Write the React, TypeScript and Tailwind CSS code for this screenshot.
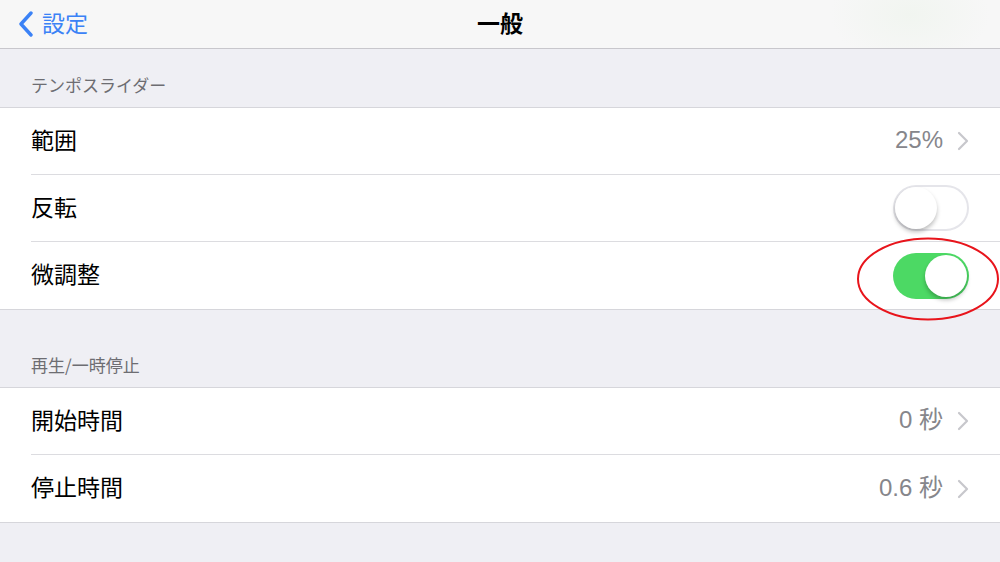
import { ReactNode } from "react"

const font = { fontFamily: '"Noto Sans CJK JP", sans-serif' }

function Chevron() {
  return (
    <svg width="13" height="20" viewBox="0 0 13 20" fill="none" className="ml-[14px]">
      <path d="M2 2l8 8-8 8" stroke="#c7c7cc" strokeWidth="2.2" strokeLinecap="round" strokeLinejoin="round" />
    </svg>
  )
}

function Toggle({ on }: { on?: boolean }) {
  return (
    <div
      className={
        on
          ? "w-[76px] h-[46px] rounded-full bg-[#4cd964] flex items-center justify-end p-[2px]"
          : "w-[76px] h-[46px] rounded-full bg-white border-2 border-[#e5e5ea] flex items-center justify-start"
      }
    >
      <div className="w-[42px] h-[42px] rounded-full bg-white shadow-[0_3px_4px_rgba(0,0,0,0.25)]" />
    </div>
  )
}

function Row({ label, right, last }: { label: string; right: ReactNode; last?: boolean }) {
  return (
    <div className="pl-[31px] bg-white">
      <div className={"h-[67px] flex items-center justify-between pr-[30px] " + (last ? "" : "border-b border-[#dcdce0]")}>
        <span className="text-[23px] text-black pb-[4px]">{label}</span>
        {right}
      </div>
    </div>
  )
}

function Value({ text }: { text: string }) {
  return (
    <div className="flex items-center">
      <span
        className="text-[24px] text-[#86868b] pb-[2px]"
        style={{ fontFamily: '"Liberation Sans", "Noto Sans CJK JP", sans-serif' }}
      >
        {text}
      </span>
      <Chevron />
    </div>
  )
}

function Section({ title, children }: { title: string; children: ReactNode }) {
  return (
    <div>
      <div className="h-[58px] flex items-end pl-[31px] pb-[10px] text-[17px] text-[#6d6d72]">{title}</div>
      <div className="border-y border-[#d6d6db]">{children}</div>
    </div>
  )
}

export default function App() {
  return (
    <div className="w-[1000px] h-[562px] bg-[#efeff4] overflow-hidden relative" style={font}>
      <header className="h-[49px] bg-[#f7f7f7] border-b border-[#c8c7cc] flex items-center relative bg-[radial-gradient(ellipse_80px_50px_at_910px_15px,#f1f5f0,transparent)]">
        <div className="flex items-center pl-[18px] text-[#3b82f6] text-[23px] pb-[3px]">
          <svg width="16" height="26" viewBox="0 0 16 26" fill="none" className="mr-[8px] mt-[3px]">
            <path d="M13 2L3 13l10 11" stroke="#3b82f6" strokeWidth="3.4" strokeLinecap="round" strokeLinejoin="round" />
          </svg>
          設定
        </div>
        <div className="absolute left-0 right-0 text-center text-[23px] font-bold text-black pointer-events-none pb-[3px]">一般</div>
      </header>

      <Section title="テンポスライダー">
        <Row label="範囲" right={<Value text="25%" />} />
        <Row label="反転" right={<div className="mr-[1px]"><Toggle /></div>} />
        <Row label="微調整" right={<div className="mr-[1px]"><Toggle on /></div>} last />
      </Section>

      <div className="h-[19px]" />

      <Section title="再生/一時停止">
        <Row label="開始時間" right={<Value text="0 秒" />} />
        <Row label="停止時間" right={<Value text="0.6 秒" />} last />
      </Section>

      <svg className="absolute left-[856px] top-[237px]" width="146" height="86" viewBox="0 0 146 86" fill="none">
        <ellipse cx="72" cy="42" rx="70" ry="40.5" stroke="#e8141b" strokeWidth="2" />
      </svg>
    </div>
  )
}
